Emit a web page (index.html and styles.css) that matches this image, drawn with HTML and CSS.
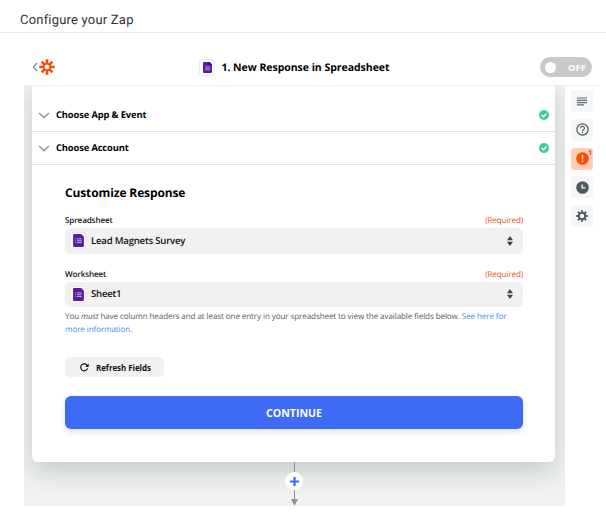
FILE: index.html
```html
<!DOCTYPE html>
<html lang="en">
<head>
  <meta charset="UTF-8">
  <meta name="viewport" content="width=device-width, initial-scale=1.0">
  <title>Configure your Zap</title>
  <link rel="stylesheet" href="styles.css">
</head>
<body>
  <header class="page-header">
    <h1>Configure your Zap</h1>
  </header>

  <div class="editor">
    <div class="toolbar">
      <a href="#" class="back">
        <svg width="6" height="10" viewBox="0 0 6 10"><path d="M5 1 1.3 5 5 9" fill="none" stroke="#8a8f90" stroke-width="1.3"/></svg>
        <svg width="16" height="16" viewBox="-8 -8 16 16" stroke="#ff4a00" stroke-width="2.5">
          <path d="M0-7.7V-2.6M0 2.6V7.7M-7.7 0H-2.6M2.6 0H7.7M-5.4-5.4-1.9-1.9M1.9 1.9 5.4 5.4M-5.4 5.4-1.9 1.9M1.9-1.9 5.4-5.4"/>
          <circle r="3.3" fill="none" stroke-width="1.6"/>
        </svg>
      </a>
      <div class="step-title">
        <span class="app-icon"><svg width="9" height="11" viewBox="0 0 10 12"><path d="M1 0H7.5L10 2.5V11a1 1 0 0 1-1 1H1a1 1 0 0 1-1-1V1a1 1 0 0 1 1-1z" fill="#591c9b"/><path d="M6.5 0 10 3.3H6.5z" fill="#3d0e70"/><path d="M2.2 5.2H8M2.2 6.9H8M2.2 8.6H8" stroke="#c5a9e2" stroke-width=".8"/></svg></span>
        <h2>1. New Response in Spreadsheet</h2>
      </div>
      <button class="toggle"><span class="knob"></span><span class="toggle-text">OFF</span></button>
    </div>

    <div class="workspace">
      <main class="canvas">
        <section class="card">
          <div class="step-row first">
            <svg class="chevron" width="12" height="7" viewBox="0 0 12 7"><path d="M1 1 6 5.7 11 1" fill="none" stroke="#999" stroke-width="1.6"/></svg>
            <h3>Choose App &amp; Event</h3>
            <svg class="check" width="10" height="10" viewBox="0 0 10 10"><circle cx="5" cy="5" r="5" fill="#3ecb97"/><path d="M2.6 5.1 4.4 6.8 7.5 3.5" fill="none" stroke="#fff" stroke-width="1.4"/></svg>
          </div>
          <div class="step-row">
            <svg class="chevron" width="12" height="7" viewBox="0 0 12 7"><path d="M1 1 6 5.7 11 1" fill="none" stroke="#999" stroke-width="1.6"/></svg>
            <h3>Choose Account</h3>
            <svg class="check" width="10" height="10" viewBox="0 0 10 10"><circle cx="5" cy="5" r="5" fill="#3ecb97"/><path d="M2.6 5.1 4.4 6.8 7.5 3.5" fill="none" stroke="#fff" stroke-width="1.4"/></svg>
          </div>

          <form class="customize">
            <h2>Customize Response</h2>

            <div class="field">
              <div class="field-label"><span>Spreadsheet</span><span class="required">(Required)</span></div>
              <div class="select">
                <span class="app-icon"><svg width="11" height="13" viewBox="0 0 10 12"><path d="M1 0H7.5L10 2.5V11a1 1 0 0 1-1 1H1a1 1 0 0 1-1-1V1a1 1 0 0 1 1-1z" fill="#591c9b"/><path d="M3.6 4.5H8M3.6 6.2H8M3.6 7.9H8M2 4.5H2.8M2 6.2H2.8M2 7.9H2.8" stroke="#c5a9e2" stroke-width=".9"/></svg></span>
                <span class="value">Lead Magnets Survey</span>
                <svg width="6" height="10" viewBox="0 0 6 10"><path d="M3 0 6 4.2H0zM0 5.8H6L3 10z" fill="#444"/></svg>
              </div>
            </div>

            <div class="field">
              <div class="field-label"><span>Worksheet</span><span class="required">(Required)</span></div>
              <div class="select">
                <span class="app-icon"><svg width="11" height="13" viewBox="0 0 10 12"><path d="M1 0H7.5L10 2.5V11a1 1 0 0 1-1 1H1a1 1 0 0 1-1-1V1a1 1 0 0 1 1-1z" fill="#591c9b"/><path d="M3.6 4.5H8M3.6 6.2H8M3.6 7.9H8M2 4.5H2.8M2 6.2H2.8M2 7.9H2.8" stroke="#c5a9e2" stroke-width=".9"/></svg></span>
                <span class="value">Sheet1</span>
                <svg width="6" height="10" viewBox="0 0 6 10"><path d="M3 0 6 4.2H0zM0 5.8H6L3 10z" fill="#444"/></svg>
              </div>
            </div>

            <p class="help">You <em>must</em> have column headers and at least one entry in your spreadsheet to view the available fields below. <a href="#">See here for<br>more information.</a></p>

            <button type="button" class="refresh">
              <svg width="9" height="9" viewBox="0 0 9 9"><path d="M7.6 5.4A3.5 3.5 0 1 1 6.8 1.9L7.7 2.8" fill="none" stroke="#111" stroke-width="1.2"/><path d="M8.6.4V3.9H5.1z" fill="#111"/></svg>
              <span>Refresh Fields</span>
            </button>
            <button type="submit" class="continue"><span>CONTINUE</span></button>
          </form>
        </section>

        <!-- Connector to the next step -->
        <div class="connector">
          <span class="line"></span>
          <button class="add-step"><svg width="9" height="9" viewBox="0 0 9 9"><path d="M4.5 0V9M0 4.5H9" stroke="#3d68f5" stroke-width="2.2"/></svg></button>
          <span class="line short"></span>
          <svg width="7" height="7" viewBox="0 0 7 7"><path d="M0 0H7L3.5 7z" fill="#8f9494"/></svg>
        </div>
      </main>

      <aside class="sidebar">
        <button><svg width="10" height="9" viewBox="0 0 10 9"><path d="M0 1H10M0 3.3H10M0 5.6H10M0 7.9H7" stroke="#5f696b" stroke-width="1.2"/></svg></button>
        <button><svg width="13" height="13" viewBox="0 0 13 13" fill="none" stroke="#4f5b5d"><circle cx="6.5" cy="6.5" r="5.6" stroke-width="1.2"/><path d="M4.6 5.2a1.9 1.9 0 1 1 2.9 1.6c-.7.4-1 .7-1 1.4M6.5 9V10.2" stroke-width="1.1"/></svg></button>
        <button class="alert"><svg width="13" height="13" viewBox="0 0 13 13"><circle cx="6.5" cy="6.5" r="6.3" fill="#ff4a00"/><path d="M6.5 2.8V7.4M6.5 8.6V10.2" stroke="#ffd9c8" stroke-width="1.6"/></svg><span class="badge">1</span></button>
        <button><svg width="13" height="13" viewBox="0 0 13 13"><circle cx="6.5" cy="6.5" r="6.3" fill="#4f5b5d"/><path d="M6.2 3.5V6.9H9.6" fill="none" stroke="#f5f7f8" stroke-width="1.4"/></svg></button>
        <button><svg width="12" height="12" viewBox="-6 -6 12 12" stroke="#4f5b5d" fill="none"><circle r="3.2" stroke-width="2"/><path d="M0-5.8V-3.6M0 3.6V5.8M-5.8 0H-3.6M3.6 0H5.8M-4.1-4.1-2.6-2.6M2.6 2.6 4.1 4.1M-4.1 4.1-2.6 2.6M2.6-2.6 4.1-4.1" stroke-width="2"/></svg></button>
      </aside>
    </div>
  </div>
</body>
</html>
```

FILE: styles.css
```css
/* General Styling */
* {
  box-sizing: border-box;
}

body {
  margin: 0;
  background: white;
  color: #111;
  font-family: 'Open Sans', sans-serif;
  text-rendering: geometricPrecision;
  height: 520px;
  overflow: hidden;
}

h1, h2, h3, p {
  margin: 0;
}

h2, h3 {
  color: #000;
}

button {
  border: none;
  padding: 0;
  font-family: inherit;
  cursor: pointer;
}

svg {
  display: block;
  flex: none;
}

a {
  color: #3d92ea;
  text-decoration: none;
}

.page-header {
  height: 33px;
  padding: 11px 20px 0;
  border-bottom: 1px solid #eaeaea;
}

.page-header h1 {
  font: 400 13px/20px Roboto, sans-serif;
  letter-spacing: 0.2px;
  color: #333;
}

/* Toolbar */
.editor {
  margin: 16px 6px 0 24px;
}

.toolbar {
  display: grid;
  grid-template-columns: 1fr auto 1fr;
  align-items: center;
  height: 37px;
  padding: 0 8px;
  border-bottom: 1px solid #efefef;
}

.back {
  display: flex;
  align-items: center;
  gap: 1px;
}

.step-title {
  display: flex;
  align-items: center;
  gap: 6px;
  padding: 1px 35px 0 0;
}

.step-title h2 {
  font-size: 10.5px;
  line-height: 16px;
  letter-spacing: -0.03px;
  white-space: nowrap;
}

.app-icon {
  display: flex;
  flex: none;
  align-items: center;
  justify-content: center;
  width: 16px;
  height: 17px;
  background: white;
  border: 1px solid #ece8f0;
  border-radius: 3px;
}

.toggle {
  justify-self: end;
  display: flex;
  align-items: center;
  justify-content: space-between;
  width: 52px;
  height: 20px;
  padding: 0 6px 0 5px;
  border-radius: 10px;
  background: #c8caca;
  color: white;
  font-size: 9.5px;
  font-weight: 700;
}

.knob {
  width: 11px;
  height: 11px;
  border-radius: 50%;
  background: white;
}

/* Canvas and card */
.workspace {
  display: flex;
  height: 420px;
}

.canvas {
  width: 541px;
  padding: 0 10px 0 8px;
  background: #f1f2f2;
  overflow: hidden;
}

.card {
  height: 376px;
  background: white;
  border-radius: 0 0 6px 6px;
  box-shadow: 0 9px 26px rgba(60, 80, 75, 0.25);
}

.step-row {
  display: flex;
  align-items: center;
  height: 33px;
  padding: 0 6px;
  border-bottom: 1px solid #e2e2e2;
}

.step-row.first {
  height: 46px;
  padding-top: 13px;
}

.step-row h3 {
  flex: 1;
  margin-left: 6px;
  font-size: 9.3px;
  line-height: 14px;
  letter-spacing: -0.1px;
}

.customize {
  padding: 19px 32px 0 33px;
}

.customize h2 {
  margin-bottom: 12px;
  font-size: 12px;
  line-height: 18px;
  letter-spacing: -0.13px;
}

.field {
  margin-bottom: 14px;
}

.field-label {
  display: flex;
  justify-content: space-between;
  height: 14px;
  font-size: 8.1px;
  line-height: 13px;
  font-weight: 600;
  letter-spacing: -0.13px;
}

.required {
  color: #e8501e;
  font-weight: 400;
}

.select {
  display: flex;
  align-items: center;
  height: 25.5px;
  padding: 0 10px 0 5px;
  border-radius: 5px;
  background: #f1f1f1;
}

.value {
  flex: 1;
  margin-left: 5px;
  font-size: 9.6px;
  line-height: 14px;
  font-weight: 600;
  letter-spacing: -0.22px;
}

.help {
  margin-top: -11px;
  height: 47px;
  color: #5c5c5c;
  font-size: 8.1px;
  line-height: 13px;
  letter-spacing: -0.115px;
  white-space: nowrap;
}

.refresh {
  display: flex;
  align-items: center;
  gap: 7px;
  width: 99px;
  height: 20px;
  padding-left: 15px;
  border-radius: 5px;
  background: #f1f1f1;
  color: #111;
  font-size: 8px;
  font-weight: 700;
  letter-spacing: -0.07px;
}

.continue {
  width: 100%;
  height: 33px;
  margin-top: 19px;
  border-radius: 6px;
  background: #3d6bf6;
  box-shadow: 0 3px 6px rgba(0, 0, 0, 0.12);
  color: white;
  font-size: 10.6px;
  font-weight: 700;
}

.connector {
  display: flex;
  flex-direction: column;
  align-items: center;
  padding-left: 1px;
}

.line {
  width: 1px;
  height: 10px;
  background: #8f9494;
}

.line.short {
  height: 9px;
}

.add-step {
  display: flex;
  align-items: center;
  justify-content: center;
  width: 18px;
  height: 18px;
  border-radius: 50%;
  background: white;
}

/* Sidebar */
.sidebar {
  display: flex;
  flex-direction: column;
  gap: 6.8px;
  padding: 4px 0 0 6px;
}

.sidebar button {
  position: relative;
  display: flex;
  align-items: center;
  justify-content: center;
  width: 22px;
  height: 22px;
  border-radius: 3px;
  background: #f4f6f7;
}

.sidebar .alert {
  background: #ffcdb8;
}

.badge {
  position: absolute;
  top: 1px;
  right: 1px;
  color: #d8481a;
  font-size: 6.5px;
  line-height: 7px;
  font-weight: 700;
}
```
